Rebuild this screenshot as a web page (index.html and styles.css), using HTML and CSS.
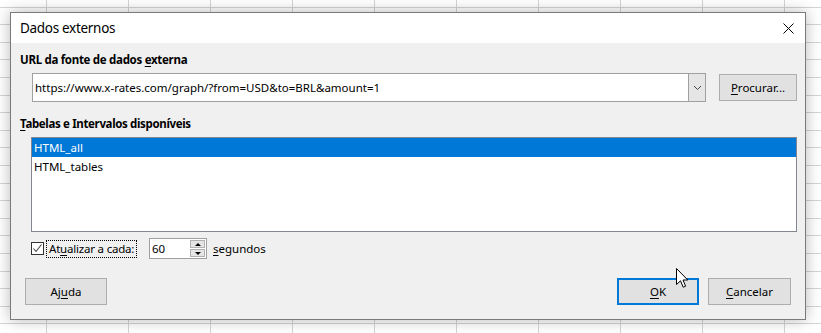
FILE: index.html
```html
<!DOCTYPE html>
<html lang="pt">
<head>
    <meta charset="UTF-8">
    <title>Dados externos</title>
    <link rel="stylesheet" href="styles.css">
</head>
<body>
    <div class="dialog">
        <div class="titlebar">
            <span class="title">Dados externos</span>
            <svg class="close" width="11" height="11" viewBox="0 0 11 11">
                <path d="M0.5 0.5 L10.5 10.5 M10.5 0.5 L0.5 10.5" stroke="#000" stroke-width="1"/>
            </svg>
        </div>

        <div class="content">
            <div class="label">URL da fonte de dados <u>e</u>xterna</div>
            <div class="url-row">
                <div class="combo">
                    <span class="combo-text">https://www.x-rates.com/graph/?from=USD&amp;to=BRL&amp;amount=1</span>
                    <span class="combo-btn">
                        <svg width="9" height="6" viewBox="0 0 9 6"><path d="M1 1 L4.5 4.5 L8 1" stroke="#444" fill="none"/></svg>
                    </span>
                </div>
                <button class="btn btn-browse"><u>P</u>rocurar...</button>
            </div>

            <div class="label label-tables"><u>T</u>abelas e Intervalos disponíveis</div>
            <div class="listbox">
                <div class="item selected">HTML_all</div>
                <div class="item">HTML_tables</div>
            </div>

            <div class="refresh-row">
                <span class="checkbox">
                    <svg width="11" height="11" viewBox="0 0 11 11"><path d="M1.5 5.5 L4 8.5 L9.5 1.5" stroke="#444" fill="none" stroke-width="1.1"/></svg>
                </span>
                <span class="check-label">At<u>u</u>alizar a cada:</span>
                <div class="spin">
                    <span class="spin-text">60</span>
                    <span class="spin-btns">
                        <span class="spin-up"></span>
                        <span class="spin-down"></span>
                    </span>
                </div>
                <span class="unit"><u>s</u>egundos</span>
            </div>

            <div class="button-row">
                <button class="btn btn-help">Aj<u>u</u>da</button>
                <div class="button-right">
                    <button class="btn btn-ok"><u>O</u>K</button>
                    <button class="btn btn-cancel"><u>C</u>ancelar</button>
                </div>
            </div>
        </div>
    </div>

    <!-- mouse pointer over the OK button -->
    <svg class="cursor" width="13" height="21" viewBox="0 0 13 21">
        <path d="M0.5 0.5 L0.5 16.5 L4.5 12.8 L7.2 19.2 L9.6 18.2 L7 12 L11.8 12 Z" fill="#fff" stroke="#000" stroke-width="1"/>
    </svg>
</body>
</html>
```

FILE: styles.css
```css
body {
    margin: 0;
    width: 821px;
    height: 333px;
    overflow: hidden;
    position: relative;
    font-family: "Segoe UI", "Noto Sans", sans-serif;
    font-size: 11.5px;
    line-height: 16px;
    color: #000;
    background-color: #fff;
    background-image:
        repeating-linear-gradient(to right, transparent 0 46px, #d4d4d4 46px 47px, transparent 47px 82px),
        repeating-linear-gradient(to bottom, transparent 0 6.6px, #d4d4d4 6.6px 7.6px, transparent 7.6px 17.6px);
}
u {
    text-decoration: underline;
    text-underline-offset: 2px;
}
.dialog {
    position: absolute;
    left: 10px;
    top: 12px;
    width: 794px;
    height: 306px;
    border: 1px solid #7a7a7a;
    background: #f0f0f0;
    box-shadow: 0 0 14px rgba(0,0,0,0.28);
    display: flex;
    flex-direction: column;
}
.titlebar {
    height: 30px;
    background: #fff;
    display: flex;
    align-items: center;
    justify-content: space-between;
    padding: 0 10px 0 9px;
}
.title {
    font-size: 13.5px;
    letter-spacing: -0.3px;
}
.close {
    margin-right: 1px;
}
.content {
    padding: 9px 8px 0 9px;
    flex: 1;
}
.label {
    font-weight: bold;
    line-height: 16px;
    letter-spacing: -0.3px;
}
.url-row {
    display: flex;
    align-items: flex-start;
    margin: 5px 0 0 12px;
}
.combo {
    width: 672px;
    height: 27px;
    border: 1px solid #a0a0a0;
    background: #fff;
    display: flex;
    align-items: center;
}
.combo-text {
    flex: 1;
    padding-left: 2px;
}
.combo-btn {
    width: 16px;
    height: 27px;
    background: #e5e5e5;
    border-left: 1px solid #a0a0a0;
    display: flex;
    align-items: center;
    justify-content: center;
}
.btn {
    font-family: inherit;
    font-size: 11.5px;
    color: #000;
    background: #e1e1e1;
    border: 1px solid #adadad;
    height: 27px;
    padding: 0;
    margin: 0;
}
.btn-browse {
    width: 78px;
    margin-left: 13px;
    margin-top: 1px;
}
.label-tables {
    margin-top: 14px;
    letter-spacing: -0.35px;
}
.listbox {
    margin: 5px 0 0 11px;
    height: 93px;
    border: 1px solid #828790;
    background: #fff;
}
.item {
    height: 19px;
    line-height: 19px;
    padding-left: 2px;
}
.item.selected {
    background: #0078d7;
    color: #fff;
}
.refresh-row {
    display: flex;
    align-items: center;
    margin: 6px 0 0 11px;
    height: 21px;
}
.checkbox {
    width: 11px;
    height: 11px;
    border: 1px solid #333;
    background: #fff;
    display: flex;
}
.check-label {
    box-sizing: border-box;
    width: 89px;
    margin-left: 3px;
    padding: 0 2px;
    line-height: 16px;
    letter-spacing: -0.2px;
    outline: 1px dotted #000;
    white-space: nowrap;
}
.spin {
    margin-left: 13px;
    width: 56px;
    height: 19px;
    border: 1px solid #a0a0a0;
    background: #fff;
    display: flex;
    align-items: center;
}
.spin-text {
    flex: 1;
    padding-left: 2px;
}
.spin-btns {
    width: 15px;
    height: 17px;
    margin-right: 1px;
    display: flex;
    flex-direction: column;
    gap: 1px;
}
.spin-up, .spin-down {
    flex: 1;
    background: #e5e5e5;
    border: 1px solid #b0b0b0;
    position: relative;
}
.spin-up::after, .spin-down::after {
    content: "";
    position: absolute;
    left: 4px;
    border-left: 3px solid transparent;
    border-right: 3px solid transparent;
}
.spin-up::after {
    top: 2px;
    border-bottom: 3px solid #000;
}
.spin-down::after {
    top: 2px;
    border-top: 3px solid #000;
}
.unit {
    margin-left: 6px;
}
.button-row {
    display: flex;
    justify-content: space-between;
    margin: 19px 0 0 5px;
}
.btn-help {
    width: 82px;
}
.button-right {
    display: flex;
    gap: 9px;
    margin-right: 6px;
}
.btn-ok {
    width: 82px;
    border: 2px solid #0078d7;
}
.btn-cancel {
    width: 83px;
}
.cursor {
    position: absolute;
    left: 676px;
    top: 268px;
}
```
